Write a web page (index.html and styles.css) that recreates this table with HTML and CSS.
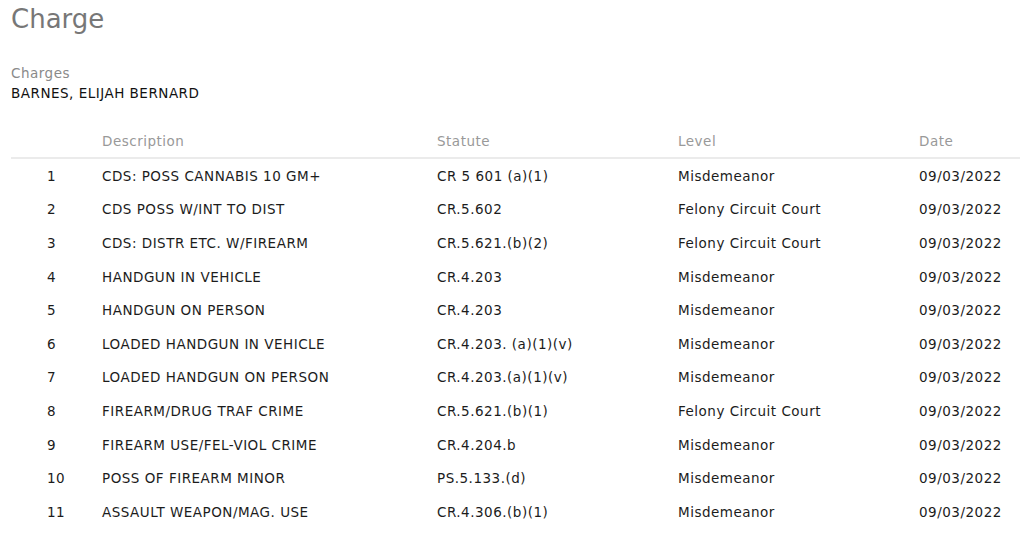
FILE: index.html
```html
<!DOCTYPE html>
<html>
<head>
<meta charset="utf-8">
<link rel="stylesheet" href="styles.css">
</head>
<body>
<div class="page">
  <h1 class="title">Charge</h1>
  <div class="person">
    <div class="label">Charges</div>
    <div class="name">BARNES, ELIJAH BERNARD</div>
  </div>
  <div class="table">
    <div class="row head">
      <div class="c num"></div>
      <div class="c">Description</div>
      <div class="c">Statute</div>
      <div class="c">Level</div>
      <div class="c">Date</div>
    </div>
    <div class="row"><div class="c num">1</div><div class="c">CDS: POSS CANNABIS 10 GM+</div><div class="c">CR 5 601 (a)(1)</div><div class="c">Misdemeanor</div><div class="c">09/03/2022</div></div>
    <div class="row"><div class="c num">2</div><div class="c">CDS POSS W/INT TO DIST</div><div class="c">CR.5.602</div><div class="c">Felony Circuit Court</div><div class="c">09/03/2022</div></div>
    <div class="row"><div class="c num">3</div><div class="c">CDS: DISTR ETC. W/FIREARM</div><div class="c">CR.5.621.(b)(2)</div><div class="c">Felony Circuit Court</div><div class="c">09/03/2022</div></div>
    <div class="row"><div class="c num">4</div><div class="c">HANDGUN IN VEHICLE</div><div class="c">CR.4.203</div><div class="c">Misdemeanor</div><div class="c">09/03/2022</div></div>
    <div class="row"><div class="c num">5</div><div class="c">HANDGUN ON PERSON</div><div class="c">CR.4.203</div><div class="c">Misdemeanor</div><div class="c">09/03/2022</div></div>
    <div class="row"><div class="c num">6</div><div class="c">LOADED HANDGUN IN VEHICLE</div><div class="c">CR.4.203. (a)(1)(v)</div><div class="c">Misdemeanor</div><div class="c">09/03/2022</div></div>
    <div class="row"><div class="c num">7</div><div class="c">LOADED HANDGUN ON PERSON</div><div class="c">CR.4.203.(a)(1)(v)</div><div class="c">Misdemeanor</div><div class="c">09/03/2022</div></div>
    <div class="row"><div class="c num">8</div><div class="c">FIREARM/DRUG TRAF CRIME</div><div class="c">CR.5.621.(b)(1)</div><div class="c">Felony Circuit Court</div><div class="c">09/03/2022</div></div>
    <div class="row"><div class="c num">9</div><div class="c">FIREARM USE/FEL-VIOL CRIME</div><div class="c">CR.4.204.b</div><div class="c">Misdemeanor</div><div class="c">09/03/2022</div></div>
    <div class="row"><div class="c num">10</div><div class="c">POSS OF FIREARM MINOR</div><div class="c">PS.5.133.(d)</div><div class="c">Misdemeanor</div><div class="c">09/03/2022</div></div>
    <div class="row"><div class="c num">11</div><div class="c">ASSAULT WEAPON/MAG. USE</div><div class="c">CR.4.306.(b)(1)</div><div class="c">Misdemeanor</div><div class="c">09/03/2022</div></div>
  </div>
</div>
</body>
</html>
```
FILE: styles.css
```css
html, body {
  margin: 0;
  padding: 0;
  background: #ffffff;
}
body {
  font-family: "DejaVu Sans", Verdana, sans-serif;
  font-size: 13.5px;
  letter-spacing: 0.5px;
  color: #1c1c1c;
}
.page {
  padding: 0 0 0 11px;
}
.title {
  margin: 0;
  font-size: 26px;
  font-weight: normal;
  letter-spacing: 0;
  color: #777777;
  line-height: 38px;
}
.person {
  margin-top: 25px;
  line-height: 20px;
}
.label {
  color: #8a8a8a;
}
.name {
  color: #111111;
}
.table {
  margin-top: 30px;
}
.row {
  display: grid;
  grid-template-columns: 91px 335px 241px 241px 1fr;
  height: 33.6px;
  align-items: center;
}
.row.head {
  height: 24px;
  color: #999999;
  border-bottom: 2px solid #ebebeb;
  align-items: start;
}
.c.num {
  padding-left: 36px;
}
```
